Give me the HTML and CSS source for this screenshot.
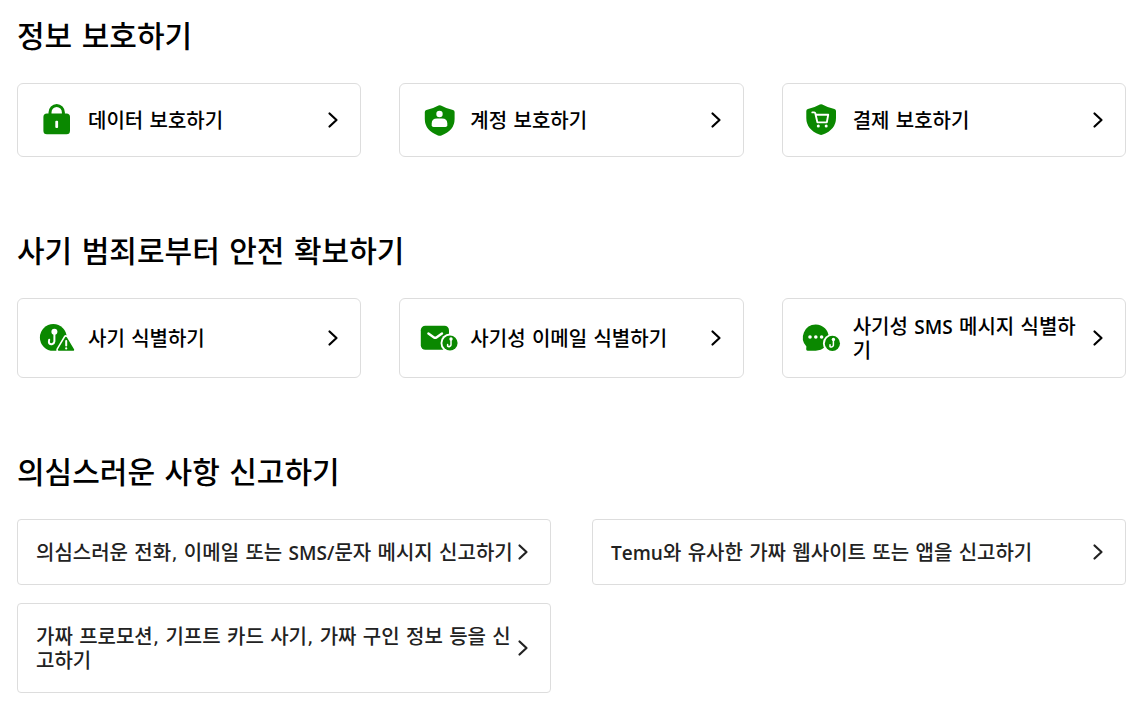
FILE: index.html
```
<!DOCTYPE html>
<html lang="ko">
<head>
  <meta charset="UTF-8">
  <meta name="viewport" content="width=device-width, initial-scale=1">
  <title>정보 보호하기</title>
  <link rel="stylesheet" href="styles.css">
</head>
<body>

  <!-- Shared symbols -->
  <svg class="symbols" aria-hidden="true">
    <symbol id="chevron" viewBox="0 0 12 18">
      <path d="M2.5 2.5 L9.5 9 L2.5 15.5" fill="none" stroke="currentColor" stroke-width="2.2" stroke-linecap="round" stroke-linejoin="round"/>
    </symbol>
    <symbol id="hook-badge" viewBox="0 0 20 20">
      <circle cx="10" cy="10" r="9.5" fill="#fff"/>
      <circle cx="10" cy="10" r="7.6" fill="#0a8800"/>
      <circle cx="11" cy="6" r="1.7" fill="#fff"/>
      <path d="M11 6.5 V12 A2.2 2.2 0 0 1 7.6 13.2 V11.4" fill="none" stroke="#fff" stroke-width="1.5" stroke-linecap="round"/>
    </symbol>
  </svg>

  <main>
    <section>
      <h2>정보 보호하기</h2>
      <div class="cards">
        <a class="card" href="#">
          <svg class="icon" viewBox="0 0 42 42">
            <path d="M14 16 V13.5 A6.7 7 0 0 1 27.4 13.5 V16" fill="none" stroke="#0a8800" stroke-width="3"/>
            <rect x="7.4" y="14.6" width="26.6" height="20.6" rx="3.5" fill="#0a8800"/>
            <rect x="19.3" y="21.8" width="2.8" height="7.2" rx="1" fill="#fff"/>
          </svg>
          <span class="text">데이터 보호하기</span>
          <svg class="arrow"><use href="#chevron"/></svg>
        </a>
        <a class="card" href="#">
          <svg class="icon" viewBox="0 0 42 42">
            <path d="M20.5 6.6 Q21.7 6 22.9 6.6 Q28 9.6 35 11 Q36.6 11.4 36.6 13 V20 Q36.6 31.5 23.4 36.4 Q21.7 37 20 36.4 Q6.8 31.5 6.8 20 V13 Q6.8 11.4 8.4 11 Q15.4 9.6 20.5 6.6 Z" fill="#0a8800"/>
            <circle cx="21.5" cy="15" r="3.2" fill="#fff"/>
            <path d="M13.7 26.2 V24.5 Q13.7 19.6 19 19.6 H24 Q29.3 19.6 29.3 24.5 V26.2 Q29.3 28 27.5 28 H15.5 Q13.7 28 13.7 26.2 Z" fill="#fff"/>
          </svg>
          <span class="text">계정 보호하기</span>
          <svg class="arrow"><use href="#chevron"/></svg>
        </a>
        <a class="card" href="#">
          <svg class="icon" viewBox="0 0 42 42">
            <path d="M18.9 5.5 Q20.1 4.9 21.3 5.5 Q26.4 8.5 33.4 9.9 Q35 10.3 35 11.9 V19 Q35 30.5 21.8 35.6 Q20.1 36.2 18.4 35.6 Q5.3 30.5 5.3 19 V11.9 Q5.3 10.3 6.9 9.9 Q13.8 8.5 18.9 5.5 Z" fill="#0a8800"/>
            <path d="M11.3 13.4 H13.2 Q14.1 13.4 14.3 14.3 L16.4 23.4 H25.8 L27.2 15.8 H14.7" fill="none" stroke="#fff" stroke-width="1.9" stroke-linecap="round" stroke-linejoin="round"/>
            <circle cx="17.3" cy="27" r="1.5" fill="#fff"/>
            <circle cx="25.2" cy="27" r="1.5" fill="#fff"/>
          </svg>
          <span class="text">결제 보호하기</span>
          <svg class="arrow"><use href="#chevron"/></svg>
        </a>
      </div>
    </section>

    <section>
      <h2>사기 범죄로부터 안전 확보하기</h2>
      <div class="cards">
        <a class="card" href="#">
          <svg class="icon" viewBox="0 0 42 42">
            <circle cx="17.3" cy="20.4" r="13.4" fill="#0a8800"/>
            <circle cx="18.4" cy="14.8" r="3" fill="#fff"/>
            <path d="M18.4 15 V24.4 A3 3 0 0 1 13.2 26.2 Q12.6 25 13.2 22.8" fill="none" stroke="#fff" stroke-width="2" stroke-linecap="round"/>
            <path d="M30 20.6 L37.2 32.8 H22.8 Z" fill="#fff" stroke="#fff" stroke-width="5" stroke-linejoin="round"/>
            <path d="M30 20.8 L37.2 32.8 H22.8 Z" fill="#0a8800" stroke="#0a8800" stroke-width="2" stroke-linejoin="round"/>
            <path d="M30.2 24 V28.4" stroke="#fff" stroke-width="2" stroke-linecap="round"/>
            <circle cx="30.2" cy="31.4" r="1.1" fill="#fff"/>
          </svg>
          <span class="text">사기 식별하기</span>
          <svg class="arrow"><use href="#chevron"/></svg>
        </a>
        <a class="card" href="#">
          <svg class="icon" viewBox="0 0 42 42">
            <rect x="2.8" y="8.8" width="28.2" height="24" rx="4.5" fill="#0a8800"/>
            <path d="M10.4 16.4 L16 20.4 Q17.2 21.2 18.4 20.4 L24 16.4" fill="none" stroke="#fff" stroke-width="2.4" stroke-linecap="round"/>
            <use href="#hook-badge" x="22" y="16" width="20" height="20"/>
          </svg>
          <span class="text">사기성 이메일 식별하기</span>
          <svg class="arrow"><use href="#chevron"/></svg>
        </a>
        <a class="card" href="#">
          <svg class="icon" viewBox="0 0 42 42">
            <path d="M14.7 7.5 A13 13 0 0 1 14.7 33.7 H6.6 Q5 33.7 5.2 32 L5.4 29.4 A13 13 0 0 1 14.7 7.5 Z" fill="#0a8800"/>
            <circle cx="9" cy="20" r="1.8" fill="#fff"/>
            <circle cx="14.8" cy="20" r="1.8" fill="#fff"/>
            <circle cx="20.6" cy="20" r="1.8" fill="#fff"/>
            <use href="#hook-badge" x="21.4" y="16.4" width="20" height="20"/>
          </svg>
          <span class="text">사기성 <span class="latin">SMS</span> 메시지 식별하기</span>
          <svg class="arrow"><use href="#chevron"/></svg>
        </a>
      </div>
    </section>

    <section>
      <h2>의심스러운 사항 신고하기</h2>
      <div class="reports">
        <a class="card report" href="#">
          <span class="text">의심스러운 전화, 이메일 또는 <span class="latin">SMS/</span>문자 메시지 신고하기</span>
          <svg class="arrow"><use href="#chevron"/></svg>
        </a>
        <a class="card report" href="#">
          <span class="text"><span class="latin">Temu</span>와 유사한 가짜 웹사이트 또는 앱을 신고하기</span>
          <svg class="arrow"><use href="#chevron"/></svg>
        </a>
        <a class="card report" href="#">
          <span class="text">가짜 프로모션, 기프트 카드 사기, 가짜 구인 정보 등을 신고하기</span>
          <svg class="arrow"><use href="#chevron"/></svg>
        </a>
      </div>
    </section>
  </main>

</body>
</html>
```

FILE: styles.css
```
* {
  box-sizing: border-box;
}

body {
  margin: 0;
  padding: 15px 19px 8px 17px;
  font-family: "DejaVu Sans", "Noto Sans CJK KR", sans-serif;
  font-weight: 500;
  background-color: #fff;
  color: #000;
}

.symbols {
  position: absolute;
  width: 0;
  height: 0;
}

section + section {
  margin-top: 73px;
}

h2 {
  margin: 0 0 24px;
  font-size: 30px;
  line-height: 44px;
  font-weight: 500;
}

.cards {
  display: grid;
  grid-template-columns: repeat(3, 1fr);
  gap: 38px;
}

.reports {
  display: grid;
  grid-template-columns: repeat(2, 1fr);
  gap: 18px 41px;
  align-items: start;
}

.card {
  display: flex;
  align-items: center;
  padding: 14px 21px 14px 18px;
  border: 1px solid #ddd;
  border-radius: 6px;
  color: #000;
  text-decoration: none;
}

.cards .card {
  min-height: 74px;
}

.icon {
  flex: none;
  width: 42px;
  height: 42px;
  margin-right: 10px;
  overflow: visible;
}

.text {
  flex: 1;
  padding-top: 2px;
  font-size: 20px;
  line-height: 24px;
  word-break: break-all;
}

.latin {
  font-family: "Open Sans", sans-serif;
  font-size: 19px;
  line-height: 20px;
  font-weight: 600;
}

.arrow {
  flex: none;
  width: 12px;
  height: 18px;
}

.report {
  padding: 19px 21px 19px 18px;
  border-radius: 4px;
  color: #222;
}
```
